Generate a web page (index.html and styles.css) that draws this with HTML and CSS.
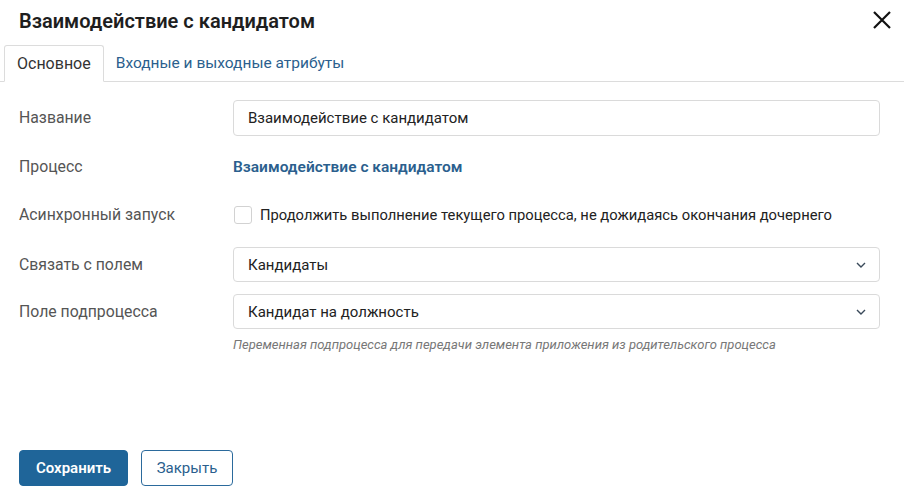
FILE: index.html
```html
<!DOCTYPE html>
<html lang="ru">
<head>
    <meta charset="UTF-8">
    <title>Взаимодействие с кандидатом</title>
    <link rel="stylesheet" href="styles.css">
</head>
<body>
    <div class="modal">
        <div class="modal-header">
            <h1>Взаимодействие с кандидатом</h1>
            <button class="close-btn" aria-label="Закрыть">
                <svg width="18" height="18" viewBox="0 0 18 18"><path d="M1 1L17 17M17 1L1 17" stroke="#111" stroke-width="2.2"/></svg>
            </button>
        </div>
        <div class="tabs">
            <div class="tab active">Основное</div>
            <div class="tab">Входные и выходные атрибуты</div>
        </div>
        <div class="form">
            <div class="row row-name">
                <div class="label">Название</div>
                <div class="field"><input type="text" class="text-input" value="Взаимодействие с кандидатом"></div>
            </div>
            <div class="row">
                <div class="label">Процесс</div>
                <div class="field"><a class="link" href="#">Взаимодействие с кандидатом</a></div>
            </div>
            <div class="row row-check">
                <div class="label">Асинхронный запуск</div>
                <div class="field">
                    <label class="check"><span class="box"></span>Продолжить выполнение текущего процесса, не дожидаясь окончания дочернего</label>
                </div>
            </div>
            <div class="row">
                <div class="label label-select">Связать с полем</div>
                <div class="field">
                    <div class="select">Кандидаты<svg width="10" height="6" viewBox="0 0 10 6"><path d="M1 1L5 5L9 1" fill="none" stroke="#3a4a5a" stroke-width="1.4"/></svg></div>
                </div>
            </div>
            <div class="row">
                <div class="label label-select">Поле подпроцесса</div>
                <div class="field">
                    <div class="select">Кандидат на должность<svg width="10" height="6" viewBox="0 0 10 6"><path d="M1 1L5 5L9 1" fill="none" stroke="#3a4a5a" stroke-width="1.4"/></svg></div>
                    <div class="hint">Переменная подпроцесса для передачи элемента приложения из родительского процесса</div>
                </div>
            </div>
        </div>
        <div class="footer">
            <button class="btn btn-primary">Сохранить</button>
            <button class="btn btn-outline">Закрыть</button>
        </div>
    </div>
</body>
</html>
```

FILE: styles.css
```css
body {
    margin: 0;
    font-family: Roboto, "Liberation Sans", sans-serif;
    color: #222;
    background: #fff;
}
.modal {
    width: 904px;
    height: 503px;
    display: flex;
    flex-direction: column;
}
.modal-header {
    display: flex;
    align-items: center;
    justify-content: space-between;
    padding: 8px 12px 0 19px;
    height: 26px;
}
h1 {
    margin: 0;
    font-size: 20px;
    font-weight: 600;
    color: #1e1e1e;
}
.close-btn {
    border: none;
    background: none;
    padding: 0;
    width: 20px;
    height: 20px;
    cursor: pointer;
}
.tabs {
    display: flex;
    margin-top: 11px;
    padding-left: 4px;
    border-bottom: 1px solid #dcdcdc;
    height: 36px;
}
.tab {
    padding: 0 12px;
    line-height: 36px;
    font-size: 15.5px;
    color: #2b5f8e;
}
.tab.active {
    color: #333;
    border: 1px solid #dcdcdc;
    border-bottom: 1px solid #fff;
    border-radius: 3px 3px 0 0;
    margin-bottom: -1px;
    background: #fff;
    line-height: 35px;
    font-size: 16px;
}
.form {
    padding: 18px 24px 0 19px;
}
.row {
    display: flex;
    margin-bottom: 12px;
}
.row-name {
    margin-bottom: 13px;
}
.row-check {
    margin-bottom: 14px;
}
.label {
    width: 214px;
    flex-shrink: 0;
    font-size: 15.8px;
    color: #555;
    line-height: 36px;
}
.label-select {
    line-height: 35px;
}
.field {
    flex: 1;
}
.text-input, .select {
    box-sizing: border-box;
    width: 100%;
    height: 36px;
    border: 1px solid #dadada;
    border-radius: 4px;
    padding: 0 14px;
    font-family: inherit;
    font-size: 15px;
    color: #222;
    outline: none;
}
.select {
    height: 35px;
    display: flex;
    align-items: center;
    justify-content: space-between;
    padding: 0 13px 0 14px;
}
.link {
    display: block;
    line-height: 36px;
    font-size: 15.5px;
    font-weight: 600;
    color: #2b5f8e;
    text-decoration: none;
}
.check {
    display: flex;
    align-items: center;
    line-height: 36px;
    font-size: 14.75px;
    color: #222;
}
.box {
    width: 16px;
    height: 16px;
    border: 1px solid #d2d2d2;
    border-radius: 3px;
    margin: 0 8px 0 1px;
}
.hint {
    margin-top: 8px;
    font-size: 13px;
    font-style: italic;
    color: #777;
}
.footer {
    margin-top: auto;
    padding: 0 19px 17px;
    display: flex;
    gap: 13px;
}
.btn {
    height: 36px;
    border-radius: 4px;
    font-family: inherit;
    font-size: 15px;
    cursor: pointer;
}
.btn-primary {
    width: 109px;
    background: #1f6599;
    border: 1px solid #1f6599;
    color: #fff;
    font-weight: 600;
}
.btn-outline {
    width: 92px;
    background: #fff;
    border: 1px solid #2b6a9c;
    color: #2b5f8e;
}
```
